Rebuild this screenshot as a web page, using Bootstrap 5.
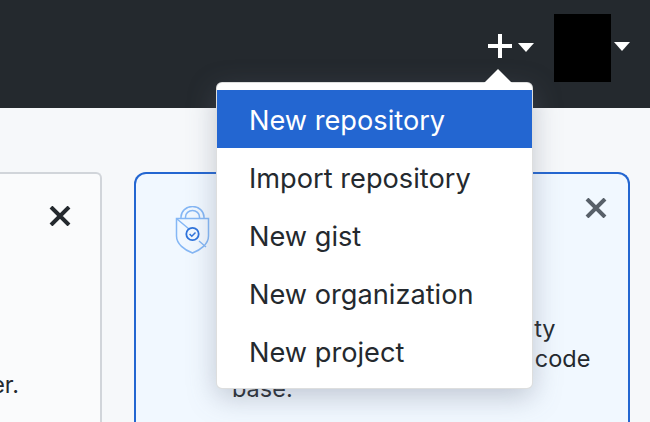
<!DOCTYPE html>
<html lang="en">
<head>
<meta charset="utf-8">
<title>New menu</title>
<link href="https://cdn.jsdelivr.net/npm/bootstrap@5.3.0/dist/css/bootstrap.min.css" rel="stylesheet">
<style>
html,body{height:422px;overflow:hidden}
body{background:#f6f8fa;color:#24292e;font-family:Inter,"Liberation Sans",sans-serif;font-size:23.5px;line-height:30px}
.topbar{height:108px;background:#24292e;padding:14px 20px 0 0;position:relative}
.plus-wrap{margin-top:20px;height:24px;gap:6px}
.tri{width:0;height:0;border-left:8px solid transparent;border-right:8px solid transparent;border-top:9px solid #fff;display:block}
.plus-wrap .tri{margin-top:9px}
.face{width:57px;height:68px;background:#000;margin-left:20px}
.face-caret{margin:28px 0 0 3px}
.menu-box{position:absolute;left:216px;top:82px;width:317px;height:307px;background:#fff;border:1px solid rgba(27,31,35,.15);border-radius:6px;padding:7px 0;box-shadow:0 8px 28px rgba(100,110,130,.35);z-index:5;margin:0;display:block}
.menu-box::before{content:"";position:absolute;left:267px;top:-14px;border-left:14px solid transparent;border-right:14px solid transparent;border-bottom:14px solid #fff}
.menu-box .dropdown-item{height:58px;padding:0 32px;font-size:27.2px;line-height:62px;color:#24292e}
.menu-box .dropdown-item.active{background:#2366d1;color:#fff}
.stage{padding:64px 20px 0 0;gap:32px;margin-left:-200px}
.old-tile{flex:0 0 302px;height:250px;background:#fafbfc;border:2px solid #d1d5da;border-width:2px 2px 0 0;border-radius:0 6px 0 0;padding-top:32px}
.old-cross{margin-right:29px}
.old-text{margin-top:144px;margin-right:81px}
.blue-tile{flex:1 1 0;min-width:0;height:250px;background:#f1f8ff;border:2px solid #2366d1;border-bottom:0;border-radius:12px 12px 0 0;padding:32px 21px 0 39px;gap:21px}
.cross{display:block;flex:none}
.blue-text{padding-top:108px;white-space:nowrap;flex:1 1 0;min-width:0}
.blue-close{margin-top:-8px}
</style>
</head>
<body>
<nav class="topbar d-flex justify-content-end align-items-start">
  <div class="plus-wrap d-flex align-items-start">
    <svg width="24" height="24" viewBox="0 0 24 24" aria-hidden="true"><path d="M10 0h4v10h10v4H14v10h-4V14H0v-4h10z" fill="#fff"/></svg>
    <span class="tri"></span>
  </div>
  <div class="face"></div>
  <span class="tri face-caret"></span>
</nav>
<ul class="dropdown-menu menu-box list-unstyled">
  <li><a class="dropdown-item active" href="#">New repository</a></li>
  <li><a class="dropdown-item" href="#">Import repository</a></li>
  <li><a class="dropdown-item" href="#">New gist</a></li>
  <li><a class="dropdown-item" href="#">New organization</a></li>
  <li><a class="dropdown-item" href="#">New project</a></li>
</ul>
<main class="stage d-flex align-items-start">
  <section class="old-tile text-end">
    <svg class="cross ms-auto old-cross" width="22" height="20" viewBox="0 0 22 20" aria-hidden="true"><path d="M2 1l18 18M20 1L2 19" stroke="#24292e" stroke-width="4" fill="none"/></svg>
    <div class="old-text">er.</div>
  </section>
  <section class="blue-tile d-flex align-items-start">
    <svg class="cross" width="36" height="48" viewBox="0 0 36 48" fill="none" aria-hidden="true">
      <g stroke="#85b7f5" stroke-width="1.5">
        <path d="M6 12V11a11.500 10.500 0 0 1 23 0v1"/>
        <path d="M10.500 12V11a7 6.500 0 0 1 14 0v1"/>
        <path d="M1.500 12.500h32V30c0 8-8 14-16 17C9.500 44 1.500 38 1.500 30z"/>
        <path d="M2 13l12 10M24 35l7 6"/>
      </g>
      <circle cx="17.500" cy="28" r="6.200" stroke="#2f74dc" stroke-width="1.800"/>
      <path d="M14.600 28l2.200 2.200 3.700-3.700" stroke="#2f74dc" stroke-width="1.500"/>
    </svg>
    <div class="blue-text">Improve your team's security<br>across your entire projects code<br>base.</div>
    <svg class="cross blue-close" width="22" height="20" viewBox="0 0 22 20" aria-hidden="true"><path d="M2 1l18 18M20 1L2 19" stroke="#586069" stroke-width="4" fill="none"/></svg>
  </section>
</main>
</body>
</html>
